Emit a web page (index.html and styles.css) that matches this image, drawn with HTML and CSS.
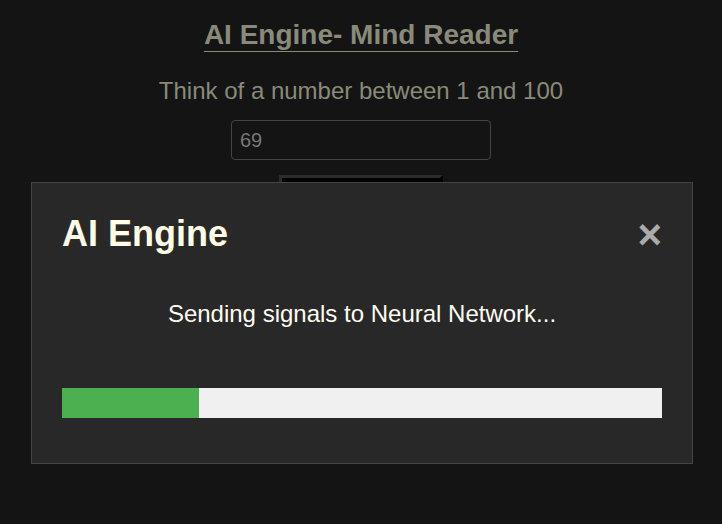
FILE: index.html
```html
<!DOCTYPE html>
<html>
<head>
<meta charset="utf-8">
<link rel="stylesheet" href="styles.css">
</head>
<body>
<main class="page">
  <h1 class="title">AI Engine- Mind Reader</h1>
  <p class="subtitle">Think of a number between 1 and 100</p>
  <input class="guess" type="text" value="69">
  <button class="go"></button>
</main>
<div class="modal">
  <div class="modal-head">
    <h2 class="modal-title">AI Engine</h2>
    <span class="close">&times;</span>
  </div>
  <p class="modal-text">Sending signals to Neural Network...</p>
  <div class="progress"><div class="progress-fill" style="width:137px"></div></div>
</div>
</body>
</html>
```
FILE: styles.css
```css
html, body {
  margin: 0;
  padding: 0;
  background: #141414;
  font-family: "Liberation Sans", Arial, sans-serif;
}
.page {
  display: flex;
  flex-direction: column;
  align-items: center;
  padding-top: 19px;
}
.title {
  margin: 0;
  font-size: 28px;
  font-weight: bold;
  color: #8a8a7b;
  text-decoration: underline;
  text-underline-offset: 7px;
  text-decoration-thickness: 1px;
}
.subtitle {
  margin: 26px 0 0;
  font-size: 24px;
  color: #8a8a7b;
}
.guess {
  margin-top: 15px;
  box-sizing: border-box;
  width: 260px;
  height: 40px;
  padding: 0 8px;
  background: #141414;
  border: 1px solid #444;
  border-radius: 4px;
  color: #777;
  font-family: "Liberation Sans", Arial, sans-serif;
  font-size: 20px;
  outline: none;
}
.go {
  margin-top: 15px;
  width: 164px;
  height: 40px;
  background: #000;
  border-style: solid;
  border-width: 3px;
  border-color: #2b2b2b #000 #000 #2b2b2b;
}
.modal {
  position: fixed;
  left: 31px;
  top: 182px;
  width: 600px;
  box-sizing: content-box;
  padding: 28px 30px 45px;
  background: #282828;
  border: 1px solid #444;
}
.modal-head {
  display: flex;
  justify-content: space-between;
  align-items: center;
}
.modal-title {
  margin: 0;
  font-size: 36px;
  font-weight: bold;
  color: #fffde6;
}
.close {
  font-size: 42px;
  font-weight: bold;
  color: #aaa;
  line-height: 1;
  margin-top: 3px;
}
.modal-text {
  margin: 44px 0 0;
  text-align: center;
  font-size: 24px;
  color: #fffdf0;
}
.progress {
  margin-top: 60px;
  height: 30px;
  background: #f0f0f0;
}
.progress-fill {
  height: 100%;
  background: #4caf50;
}
```
